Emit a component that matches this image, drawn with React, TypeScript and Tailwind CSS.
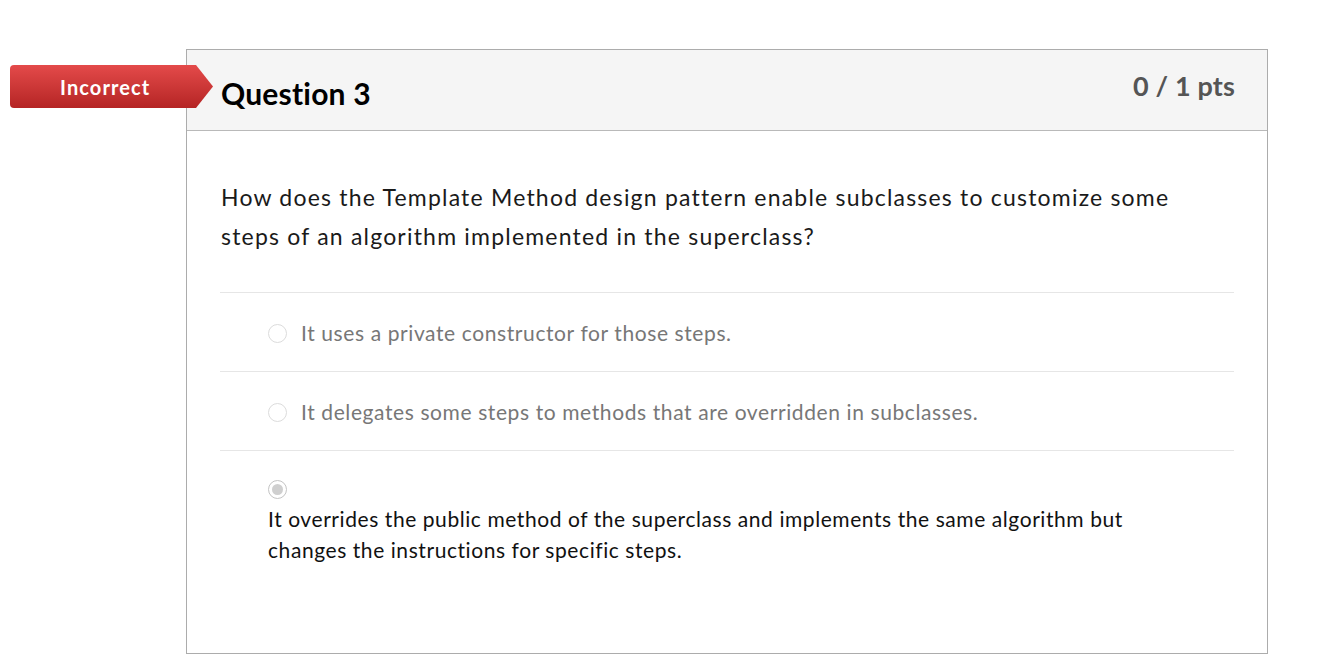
const answers = [
  { text: 'It uses a private constructor for those steps.', picked: false },
  { text: 'It delegates some steps to methods that are overridden in subclasses.', picked: false },
  {
    text: 'It overrides the public method of the superclass and implements the same algorithm but changes the instructions for specific steps.',
    picked: true,
  },
]

function Radio({ checked }: { checked: boolean }) {
  return (
    <span
      className={`inline-flex w-[19px] h-[19px] shrink-0 rounded-full border items-center justify-center bg-white ${
        checked ? 'border-[#c4c4c4]' : 'border-[#dcdcdc]'
      }`}
    >
      {checked && <span className="w-[11px] h-[11px] rounded-full bg-[#cfcfcf]" />}
    </span>
  )
}

export default function App() {
  return (
    <div className="w-full h-[668px] bg-white overflow-hidden font-['Lato','Liberation_Sans',sans-serif] pt-[49px] pl-[186px]">
      <div className="relative w-[1082px] h-[605px] border border-[#acacac]">
        {/* status badge */}
        <div className="absolute left-[-177px] top-[15px] w-[203px] h-[43px] rounded-l-[4px] bg-gradient-to-b from-[#e44a4a] to-[#b52424] [clip-path:polygon(0_0,186px_0,203px_50%,186px_100%,0_100%)] flex items-center pl-[50px]">
          <span className="text-white text-[20px] font-bold tracking-[1.1px]">Incorrect</span>
        </div>

        {/* header */}
        <div className="h-[81px] bg-[#f5f5f5] border-b border-[#b9b9b9] flex justify-between pl-[34px] pr-[32px]">
          <h2 className="pt-[25px] text-[30px] leading-[1.2] font-bold text-black tracking-[0.2px]">Question 3</h2>
          <div className="pt-[20px] text-[27px] leading-[1.2] font-bold text-[#555] tracking-[0.15px]">0 / 1 pts</div>
        </div>

        {/* body */}
        <div className="px-[33px]">
          <p className="pt-[47px] pl-[1px] w-[975px] text-[23px] leading-[38.5px] text-[#1a1a1a] tracking-[1.2px]">
            How does the Template Method design pattern enable subclasses to customize some steps of an
            algorithm implemented in the superclass?
          </p>

          <div className="mt-[37px]">
            {answers.map((a, i) =>
              a.picked ? (
                <div key={i} className="border-t border-[#e6e6e6] pl-[48px] pt-[26px]">
                  <Radio checked />
                  <div className="mt-[2px] w-[885px] text-[21px] leading-[31px] text-[#111] tracking-[0.57px]">
                    {a.text}
                  </div>
                </div>
              ) : (
                <div
                  key={i}
                  className="border-t border-[#e6e6e6] pl-[48px] pt-[25px] pb-[23px] flex items-center gap-[14px]"
                >
                  <Radio checked={false} />
                  <span className="text-[21px] leading-[30px] text-[#777] tracking-[0.6px]">{a.text}</span>
                </div>
              )
            )}
          </div>
        </div>
      </div>
    </div>
  )
}
